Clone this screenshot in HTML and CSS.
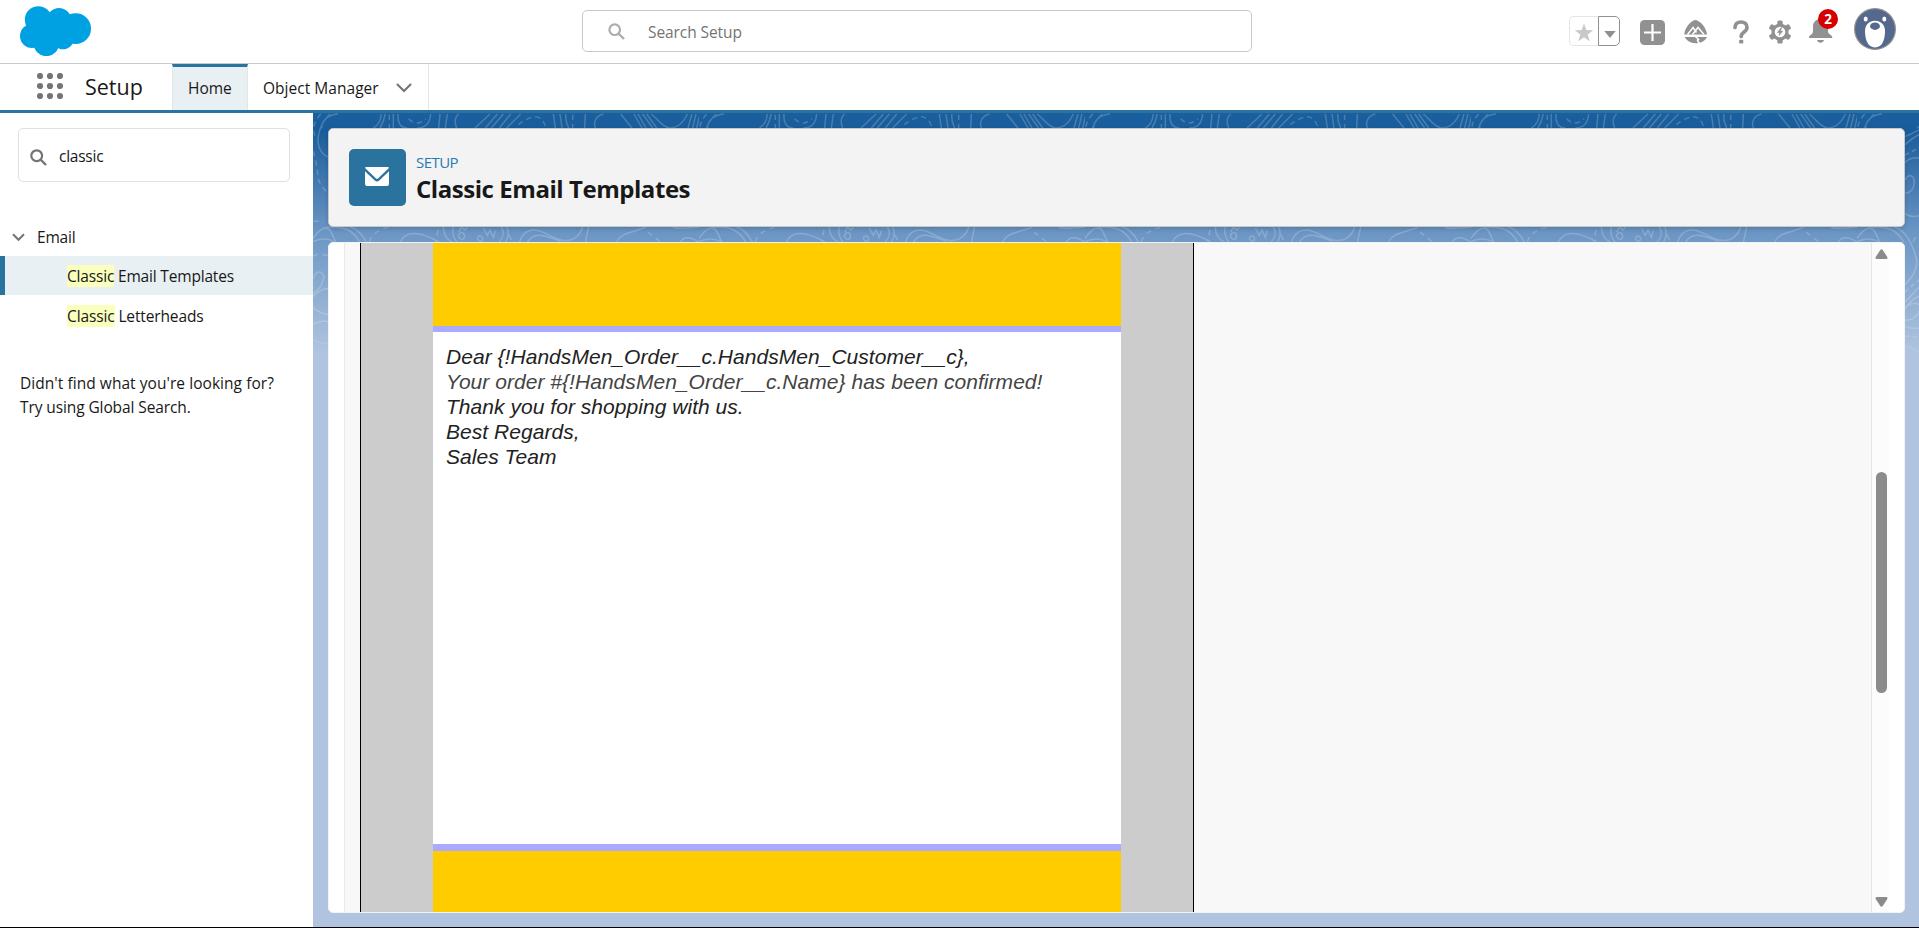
FILE: index.html
```html
<!DOCTYPE html>
<html lang="en">
<head>
<meta charset="utf-8">
<title>Classic Email Templates | Setup</title>
<link rel="stylesheet" href="styles.css">
</head>
<body>
<div class="app">
  <header class="topbar">
    <svg class="logo" width="71" height="50" viewBox="60 17 213 150" fill="#00a1e3">
      <circle cx="115" cy="58" r="40.500"/><circle cx="177" cy="59" r="36"/><circle cx="227" cy="85" r="46"/>
      <circle cx="96" cy="107" r="36"/><circle cx="139" cy="130" r="37.500"/><circle cx="189" cy="115" r="32"/>
      <path d="M80 60h120v70H85z"/>
    </svg>
    <div class="global-search">
      <svg width="17" height="17" viewBox="0 0 17 17" fill="none" stroke="#adadad"><circle cx="6.700" cy="6.700" r="5.300" stroke-width="2.200"/><path d="M10.500 10.500L16 16" stroke-width="2.400"/></svg>
      <span class="t-search">Search Setup</span>
    </div>
    <div class="actions">
      <div class="favorites">
        <span class="star"><svg width="20" height="19" viewBox="0 0 20 19" fill="#c9c9c9"><path d="M10 .5l2.300 6.600 7 .1-5.600 4.200 2 6.800L10 14.200l-5.700 4 2-6.800L.7 7.200l7-.1z"/></svg></span>
        <span class="drop"><svg width="12" height="7" viewBox="0 0 12 7" fill="#8f8f8f"><path d="M.3 0h11.400L6 7z"/></svg></span>
      </div>
      <svg class="i-add" width="25" height="25" viewBox="0 0 25 25"><rect width="25" height="25" rx="4.500" fill="#919191"/><path d="M12.500 4v17M4 12.500h17" stroke="#fff" stroke-width="2.200"/></svg>
      <svg class="i-trail" width="24" height="24" viewBox="0 0 24 24"><path d="M11.500 0c3 .3 8.800 4.200 11.200 12.500L23 14.500H.3l.2-2C2.500 5 8.300.3 11.500 0zM.7 17h9.800l3 2-1 1 1.500 3c-2 .4-5 .2-7.500-.8C4 21 1.600 19 .7 17zM13 17h10c-1.400 3-4.200 5-7.200 5.700L14.500 20.500l1.200-1.300z" fill="#919191"/><path d="M3.500 14.500L9 7.500l3.500 5M8.500 14.500L14 7.500l6 7" fill="none" stroke="#fff" stroke-width="1.500"/></svg>
      <svg class="i-help" width="16" height="24" viewBox="0 0 16 24"><path d="M2 7.500C2 4 4.500 2 8 2s6 2 6 5.500c0 4.700-5.800 4.200-5.800 9" fill="none" stroke="#919191" stroke-width="3.700" stroke-linecap="round"/><rect x="6.100" y="19.800" width="4.200" height="3.800" rx="1" fill="#919191"/></svg>
      <svg class="i-gear" width="22" height="24" viewBox="-11 -12 22 24"><g fill="#919191"><circle r="8.600"/><rect x="-2.700" y="-11.600" width="5.400" height="23.200" rx="1.500"/><rect x="-2.700" y="-11.600" width="5.400" height="23.200" rx="1.500" transform="rotate(60)"/><rect x="-2.700" y="-11.600" width="5.400" height="23.200" rx="1.500" transform="rotate(120)"/></g><circle r="5.300" fill="#fff"/><path d="M1-4.500L-3.200.8H-.6L-1.500 4.500 3.200-1.200H.5L2.400-4.500z" fill="#919191"/></svg>
      <div class="bell">
        <svg width="24" height="24" viewBox="0 0 24 24" fill="#919191"><path d="M11.500 0C16 0 19 3.300 19 7.500V12c0 2 1 3 3 4.300.7.500 1.300 1 1.300 2.700H0c0-1.700.5-2.200 1.300-2.700C3.200 15 4 14 4 12V7.500C4 3.300 7 0 11.500 0zM8 21h7c-.6 1.800-1.900 2.800-3.500 2.800S8.600 22.800 8 21z"/></svg>
        <span class="badge">2</span>
      </div>
      <svg class="avatar" width="42" height="42" viewBox="-21 -21 42 42"><circle r="20.400" fill="#54698d" stroke="#939393" stroke-width="1.200"/><ellipse cx="-9.300" cy="-10" rx="2" ry="2.600" fill="#fff"/><ellipse cx="9.300" cy="-10" rx="2" ry="2.600" fill="#fff"/><path d="M0-8.300C7-8.300 10-3 10 2 10 10 7.500 18.500 0 18.500S-10 10-10 2C-10-3-7-8.300 0-8.300z" fill="#fff"/><ellipse cy="-2.800" rx="4.900" ry="3.700" fill="#54698d"/></svg>
    </div>
  </header>
  <nav class="navbar">
    <svg class="waffle" width="26" height="26" viewBox="0 0 26 26" fill="#747474"><circle cx="3" cy="3" r="3.100"/><circle cx="13" cy="3" r="3.100"/><circle cx="23" cy="3" r="3.100"/><circle cx="3" cy="13" r="3.100"/><circle cx="13" cy="13" r="3.100"/><circle cx="23" cy="13" r="3.100"/><circle cx="3" cy="23" r="3.100"/><circle cx="13" cy="23" r="3.100"/><circle cx="23" cy="23" r="3.100"/></svg>
    <div class="app-name"><span class="t-app">Setup</span></div>
    <div class="tab tab-active"><span class="t-home">Home</span></div>
    <div class="tab tab-object"><span class="t-object">Object Manager</span>
      <svg width="16" height="10" viewBox="0 0 16 10" fill="none" stroke="#747474" stroke-width="2.100" stroke-linecap="round"><path d="M1.500 1.500L8 8l6.500-6.500"/></svg>
    </div>
  </nav>
  <div class="body">
    <aside class="sidebar">
      <div class="quick-find">
        <svg width="17" height="17" viewBox="0 0 17 17" fill="none" stroke="#747474"><circle cx="6.700" cy="6.700" r="5.400" stroke-width="2.200"/><path d="M10.500 10.500L16 16" stroke-width="2.400"/></svg>
        <span class="t-classic">classic</span>
      </div>
      <div class="tree-head">
        <svg width="13" height="9" viewBox="0 0 13 9" fill="none" stroke="#747474" stroke-width="2"><path d="M1 1.300l5.500 5.500L12 1.300"/></svg>
        <span class="t-email">Email</span>
      </div>
      <div class="tree-item selected"><span class="t-cet"><mark>Classic</mark> Email Templates</span></div>
      <div class="tree-item"><span class="t-cl"><mark>Classic</mark> Letterheads</span></div>
      <div class="hint"><div><span class="t-hint1">Didn't find what you're looking for?</span></div><div><span class="t-hint2">Try using Global Search.</span></div></div>
    </aside>
    <main class="main">
      <svg class="topo" width="1606" height="260">
        <defs>
          <pattern id="contours" width="386" height="260" patternUnits="userSpaceOnUse">
            <g transform="translate(-3 -3) scale(.33333)" fill="none" stroke="#fff" stroke-opacity=".2" stroke-width="4.500">
              <path d="M84 12C52 14 34 34 35 55M60 12C30 40 12 90 34 125 42 136 50 140 58 142M214 12C212 32 206 46 190 54M226 12C222 30 216 44 210 54M250 12V54M264 12C262 36 270 54 292 54M362 12C360 38 346 54 322 54M390 12L386 54M412 12L406 54M446 12C432 24 434 40 440 54M540 12L495 54M562 12L526 54M580 12L544 54M602 12L568 54M632 12L590 54M730 12L736 54M750 12L756 54M768 12C764 30 772 42 776 54M826 12L824 54M880 12C856 18 850 38 856 54M932 12L966 54M972 12L996 54M984 12L1008 54M998 12L1028 54M1010 12L1040 54M1024 12C1048 32 1056 50 1078 54 1106 54 1122 34 1132 12M1146 12L1134 54M1158 12L1148 54M1170 12L1160 54"/>
              <path stroke-dasharray="16 12" d="M32 12C8 40 6 60 20 90M10 124C18 150 24 190 24 206 34 230 48 246 60 252M238 14V54M296 26C310 42 330 44 348 26M625 44C650 26 690 0 706 48M788 14V54"/>
              <path d="M9 386C26 360 50 340 64 368L78 398M48 352C100 346 130 360 150 398M9 395C34 382 60 386 74 396M270 398C286 362 326 362 386 396M400 351C400 370 410 388 428 398M430 351C424 372 432 386 442 398M446 366L454 352 466 360 472 352M452 368C440 374 448 390 458 388 468 384 464 366 452 368M508 378C496 382 506 396 514 394 522 388 516 376 508 378M520 354L532 376 540 360 550 382 556 362M574 351C584 366 580 384 566 398M590 351C598 366 594 386 586 398M628 398C640 360 668 350 706 370S774 402 800 380C814 368 816 358 818 351M652 398C670 362 704 376 752 394M836 351L826 398M920 398C930 366 974 368 1008 351M1088 351C1104 360 1150 350 1167 352M1110 398C1124 372 1150 386 1167 396"/>
              <path stroke-dasharray="16 14" d="M178 396C184 372 206 360 240 350M604 390L594 368M1014 366L1052 396M384 360L378 392M10 334L42 334M9 438C20 432 28 430 58 438"/>
              <path d="M9 506C20 480 34 480 42 500 36 530 20 545 9 550M9 560C28 540 44 534 60 536M9 592C28 610 44 615 64 613M9 644C28 632 44 628 60 638M9 690C28 700 44 704 60 700"/>
              <path d="M153 80C170 72 182 66 198 58M153 104C168 90 182 80 198 72M153 158C164 144 178 142 198 144M153 210C164 188 184 196 180 222 178 244 160 252 153 248M153 310C168 322 182 322 198 316M120 351C164 360 184 430 188 450 190 486 168 508 153 524M153 598C168 570 184 562 198 558M153 576C174 556 184 540 198 530M153 592C174 578 190 578 198 586M153 630C174 634 190 618 198 600M153 650C174 658 184 656 198 654M153 706C174 714 190 720 198 728"/>
              <path stroke-dasharray="14 9" d="M153 135L198 112M153 546C174 526 184 520 198 508M153 678L198 682"/>
            </g>
          </pattern>
          <linearGradient id="fade" x1="0" y1="0" x2="0" y2="1"><stop offset="0" stop-color="#fff"/><stop offset=".8" stop-color="#fff"/><stop offset="1" stop-color="#000"/></linearGradient>
          <mask id="fadeMask"><rect width="1606" height="260" fill="url(#fade)"/></mask>
        </defs>
        <rect width="1606" height="260" fill="url(#contours)" mask="url(#fadeMask)"/>
      </svg>
      <section class="page-header">
        <div class="page-icon"><svg width="24" height="19" viewBox="0 0 24 19" fill="#fff"><path d="M1 0h22a1 1 0 0 1 .7 1.300L13 11.500a1.500 1.500 0 0 1-2 0L.3 1.300A1 1 0 0 1 1 0zM0 4.200l9.500 9a3.600 3.600 0 0 0 5 0l9.500-9V17a2 2 0 0 1-2 2H2a2 2 0 0 1-2-2z"/></svg></div>
        <div class="page-titles"><div class="eyebrow"><span class="t-eye">SETUP</span></div><h1><span class="t-title">Classic Email Templates</span></h1></div>
      </section>
      <section class="panel">
        <div class="frame">
          <div class="letter">
            <div class="paper">
              <div class="band band-top"></div>
              <div class="message">
                <div>Dear {!HandsMen_Order__c.HandsMen_Customer__c},</div>
                <div class="soft">Your order #{!HandsMen_Order__c.Name} has been confirmed!</div>
                <div>Thank you for shopping with us.</div>
                <div>Best Regards,</div>
                <div>Sales Team</div>
              </div>
              <div class="band band-bottom"></div>
            </div>
          </div>
        </div>
        <div class="scrollbar">
          <svg width="13" height="10" viewBox="0 0 13 10" fill="#8b8b8b"><path d="M5.300 1a1.500 1.500 0 0 1 2.400 0l4.600 7a1.300 1.300 0 0 1-1 2H1.700a1.300 1.300 0 0 1-1-2z"/></svg>
          <div class="thumb"></div>
          <svg width="13" height="10" viewBox="0 0 13 10" fill="#8b8b8b"><path d="M5.300 9a1.500 1.500 0 0 0 2.400 0l4.600-7a1.300 1.300 0 0 0-1-2H1.700a1.300 1.300 0 0 0-1 2z"/></svg>
        </div>
      </section>
    </main>
  </div>
</div>
</body>
</html>
```
FILE: styles.css
```css
* { box-sizing: border-box; }
body { margin: 0; font-family: "Open Sans", "Noto Sans", sans-serif; color: #181818; font-size: 15.5px; background: #fff; }
svg { display: block; flex: none; }
span { white-space: nowrap; }
.app { width: 1919px; height: 928px; display: flex; flex-direction: column; border-bottom: 1px solid #000; overflow: hidden; }

.topbar { height: 64px; flex: none; display: flex; border-bottom: 1px solid #c9c9c9; padding-left: 20px; }
.logo { margin-top: 6px; }
.global-search { margin: 10px 0 0 491px; width: 670px; height: 42px; border: 1px solid #c9c9c9; border-radius: 5px; display: flex; align-items: center; padding-left: 25px; gap: 23px; color: #747474; }
.t-search { padding-top: 2px; letter-spacing: -.08px; }
.actions { display: flex; margin-left: 317px; align-items: flex-start; }
.favorites { display: flex; margin-top: 16px; width: 51px; height: 30px; }
.star { width: 29px; border: 1px solid #e5e5e5; border-right: 0; border-radius: 5px 0 0 5px; padding: 6px 0 0 4px; }
.drop { width: 22px; border: 1px solid #919191; border-radius: 0 5px 5px 0; padding: 14px 0 0 5px; }
.i-add { margin: 20px 0 0 20px; }
.i-trail { margin: 20px 0 0 19px; }
.i-help { margin: 20px 0 0 25px; }
.i-gear { margin: 20px 0 0 20px; }
.bell { position: relative; margin: 19px 0 0 18px; }
.badge { position: absolute; left: 9px; top: -10px; width: 20px; height: 20px; border-radius: 50%; background: #d60000; color: #fff; font-weight: 700; font-size: 13.5px; line-height: 20px; text-align: center; }
.avatar { margin: 8px 0 0 21px; }

.navbar { height: 49px; flex: none; display: flex; border-bottom: 3px solid #2a739e; }
.waffle { margin: 9px 0 0 37px; }
.app-name { width: 109px; padding-left: 22px; font-size: 21.5px; line-height: 46px; }
.tab { line-height: 46px; border-right: 1px solid #e5e5e5; }
.tab-active { width: 76px; padding-left: 15px; background: #e8f0f4; border-left: 1px solid #e5e5e5; border-top: 3px solid #2a739e; line-height: 42px; }
.tab-object { width: 181px; padding-left: 15px; display: flex; align-items: center; justify-content: space-between; padding-right: 16px; }
.tab-object svg { margin-top: 2px; }
.t-object { letter-spacing: .03px; padding-top: 1px; }

.body { flex: 1; display: flex; min-height: 0; }
.sidebar { width: 313px; flex: none; padding-top: 15px; }
.quick-find { margin-left: 18px; width: 272px; height: 54px; border: 1px solid #e0e0e0; border-radius: 5px; display: flex; align-items: center; padding: 4px 0 0 11px; gap: 12px; }
.quick-find span { margin-top: -3px; letter-spacing: -.25px; }
.tree-head { margin-top: 36px; height: 38px; display: flex; align-items: center; padding-left: 12px; gap: 12px; }
.t-email { letter-spacing: -.2px; }
.tree-item { height: 39px; line-height: 41px; padding-left: 67px; margin-bottom: 1px; }
.tree-item.selected { background: #e8f0f4; border-left: 5px solid #2a739e; padding-left: 62px; }
.t-cet { letter-spacing: -.18px; }
.t-cl { letter-spacing: -.13px; }
mark { background: #faffbd; color: inherit; }
.hint { padding: 35px 0 0 20px; line-height: 24px; }
.t-hint1 { letter-spacing: .05px; }
.t-hint2 { letter-spacing: -.1px; }

.main { position: relative; flex: 1; min-width: 0; padding: 15px 14px 14px 15px; display: flex; flex-direction: column; gap: 15px; background: linear-gradient(#1b5f9e 0, #195c9b 18px, #6a95c4 118px, #b0c4df 240px); }
.topo { position: absolute; left: 0; top: 0; }
.page-header { position: relative; height: 99px; flex: none; border: 1px solid #c9c9c9; border-radius: 5px; background: #f3f3f3; box-shadow: 0 2px 4px rgba(0,0,0,.16); display: flex; gap: 10px; padding: 20px; }
.page-icon { width: 57px; height: 57px; border-radius: 5px; background: #2a739e; display: grid; place-items: center; padding: 0 1px 2px 0; }
.eyebrow { color: #2a7ab0; line-height: 20px; margin-top: 3px; }
.t-eye { font-size: 15px; letter-spacing: -.55px; }
h1 { margin: 2px 0 0; font-size: 24px; line-height: 30px; font-weight: 700; letter-spacing: -.45px; }
.panel { position: relative; flex: 1; min-height: 0; border: 1px solid #f3f3f3; border-radius: 5px; background: #fff; display: flex; padding-right: 15px; overflow: hidden; }
.frame { flex: 1; margin-left: 15px; border-left: 1px solid #e8e8e8; border-right: 1px solid #e5e5e5; background: #f8f8f8; padding-left: 15px; display: flex; }
.letter { width: 834px; background: #ccc; border: solid #000; border-width: 0 1px; padding: 0 72px; display: flex; }
.paper { width: 688px; display: flex; flex-direction: column; background: #fff; }
.band { background: #fc0; flex: none; }
.band-top { height: 89px; border-bottom: 6px solid #aaf; }
.message { flex: 1; padding: 12px 13px; font: italic 21px/25px "Liberation Sans", Arial, sans-serif; letter-spacing: .04px; color: #222; white-space: nowrap; }
.soft { color: #444; }
.band-bottom { height: 68px; border-top: 7px solid #aaf; }
.scrollbar { width: 17px; background: #fcfcfc; display: flex; flex-direction: column; align-items: center; padding: 6px 0 5px 2px; }
.thumb { width: 11px; height: 221px; border-radius: 6px; background: #8b8b8b; margin: 213px 0 auto; }
```
